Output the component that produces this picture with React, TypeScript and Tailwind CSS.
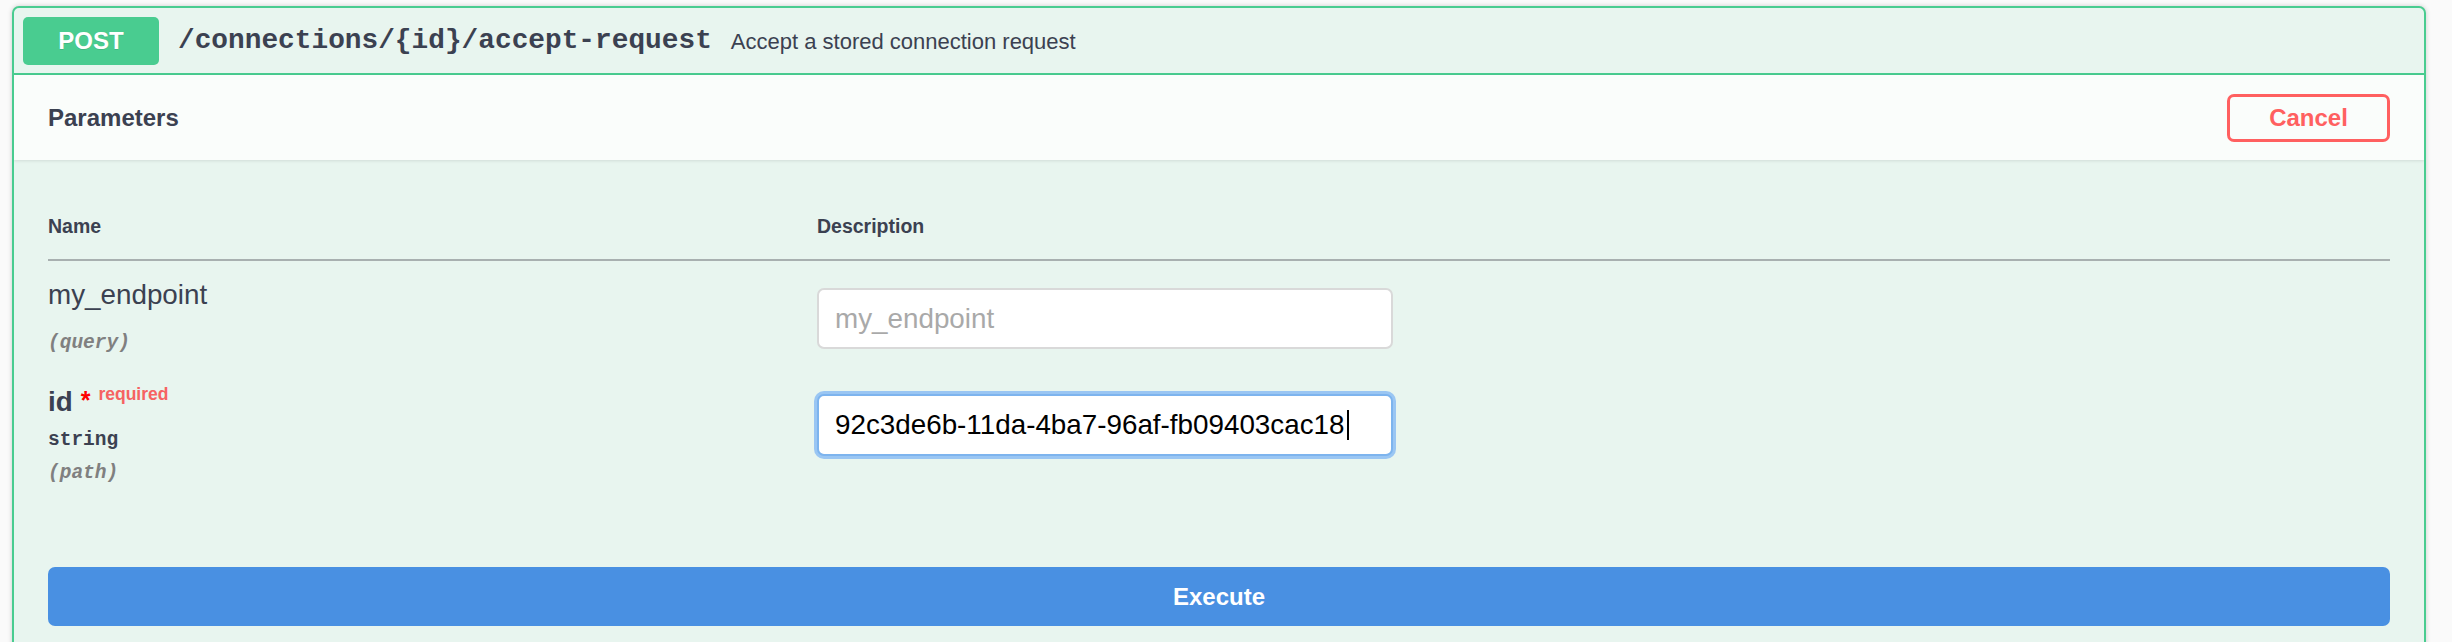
export default function App() {
  return (
    <div className="min-h-screen w-full bg-[#fafafa] pt-[6px] pl-[12px] font-['Liberation_Sans',Arial,sans-serif] text-[#3b4151]">
      <div className="w-[2414px] overflow-hidden rounded-[7px] border-2 border-[#49cc90] bg-[#e8f5ef] shadow-[0_0_5px_rgba(0,0,0,0.19)]">
        {/* Summary */}
        <div className="flex items-center border-b-2 border-[#49cc90] pb-[8px] pl-[9px] pt-[9px]">
          <div className="flex h-[48px] w-[136px] items-center justify-center rounded-[5px] bg-[#49cc90] text-[24px] font-bold text-white [text-shadow:0_1px_0_rgba(0,0,0,0.1)]">
            POST
          </div>
          <span className="ml-[19px] font-['Liberation_Mono','Courier_New',monospace] text-[27.8px] font-bold text-[#3b4151]">
            /connections/{"{id}"}/accept-request
          </span>
          <span className="ml-[19px] text-[22px] text-[#3b4151]">Accept a stored connection request</span>
        </div>

        {/* Section header */}
        <div className="flex h-[85px] items-center justify-between bg-[#fafdfb] px-[34px] shadow-[0_1px_3px_rgba(0,0,0,0.1)]">
          <h4 className="text-[24px] font-bold text-[#3b4151]">Parameters</h4>
          <button className="flex h-[48px] w-[163px] items-center justify-center rounded-[7px] border-[3px] border-[#ff6060] bg-transparent text-[24px] font-bold text-[#ff6060]">
            Cancel
          </button>
        </div>

        {/* Body */}
        <div className="px-[34px] pb-[34px] pt-[34px]">
          <div className="flex border-b-2 border-[#a8b0b0] py-[20px] text-[19.5px] font-bold leading-[25px] text-[#3b4151]">
            <div className="w-[769px]">Name</div>
            <div>Description</div>
          </div>

          {/* Row 1 */}
          <div className="flex pt-[17px]">
            <div className="w-[769px]">
              <div className="text-[27.8px] leading-[34px] text-[#3b4151]">my_endpoint</div>
              <div className="mt-[19px] font-['Liberation_Mono','Courier_New',monospace] text-[19.5px] font-bold italic leading-[24px] text-[#808080]">
                (query)
              </div>
            </div>
            <div>
              <input
                readOnly
                placeholder="my_endpoint"
                className="mt-[10px] h-[61px] w-[576px] rounded-[7px] border-2 border-[#d9d9d9] bg-white px-[16px] text-[27.8px] text-black outline-none placeholder:text-[#a9a9a9]"
              />
            </div>
          </div>

          {/* Row 2 */}
          <div className="flex pt-[30px]">
            <div className="w-[769px]">
              <div className="text-[27.8px] font-bold leading-[34px] text-[#3b4151]">
                id
                <span className="ml-[8px] align-[2px] text-[25px] leading-none text-[#ff0000]">*</span>
                <span className="ml-[8px] align-[11px] text-[17.5px] leading-none text-[#f66262]">required</span>
              </div>
              <div className="mt-[9px] font-['Liberation_Mono','Courier_New',monospace] text-[19.5px] font-bold leading-[24px] text-[#3b4151]">
                string
              </div>
              <div className="mt-[9px] font-['Liberation_Mono','Courier_New',monospace] text-[19.5px] font-bold italic leading-[24px] text-[#808080]">
                (path)
              </div>
            </div>
            <div>
              <div className="mt-[9px] flex h-[62px] w-[576px] items-center rounded-[7px] border-2 border-[#7db4ee] bg-white px-[16px] text-[27.8px] text-black shadow-[0_0_0_3px_#9ac6f3]">
                <span>92c3de6b-11da-4ba7-96af-fb09403cac18</span>
                <span className="ml-[2px] inline-block h-[30px] w-[2px] bg-black" />
              </div>
            </div>
          </div>

          {/* Execute */}
          <button className="mt-[82px] flex h-[59px] w-full items-center justify-center rounded-[7px] bg-[#4990e2] text-[24px] font-bold text-white">
            Execute
          </button>
        </div>
      </div>
    </div>
  );
}
